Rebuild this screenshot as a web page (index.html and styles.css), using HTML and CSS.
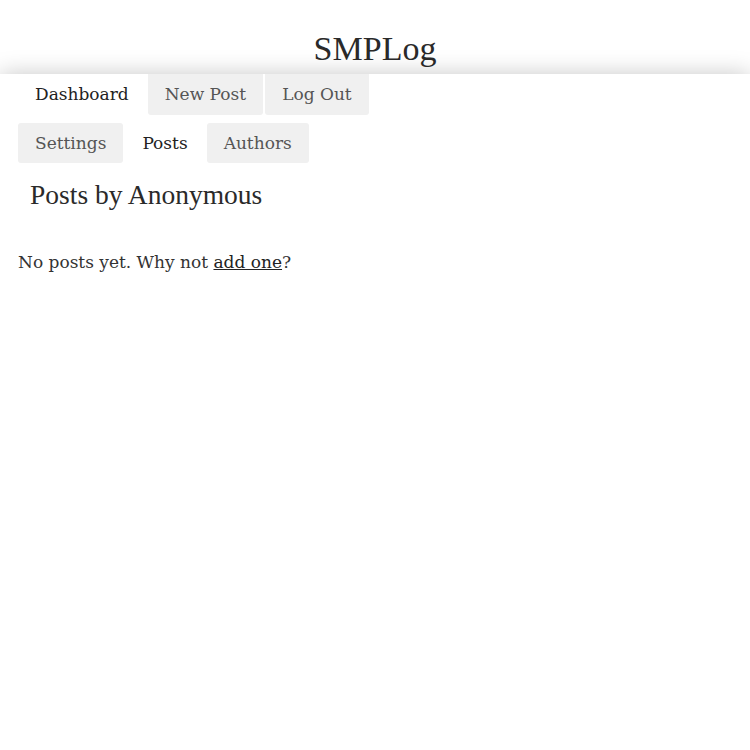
FILE: index.html
```html
<!DOCTYPE html>
<html>
<head>
<meta charset="utf-8">
<title>SMPLog</title>
<link rel="stylesheet" href="styles.css">
</head>
<body>
<header class="site-header">
  <h1 class="site-title">SMPLog</h1>
</header>
<div class="page">
  <nav class="tabs tabs-main">
    <a class="tab active" href="#">Dashboard</a>
    <a class="tab" href="#">New Post</a>
    <a class="tab" href="#">Log Out</a>
  </nav>
  <nav class="tabs tabs-sub">
    <a class="tab" href="#">Settings</a>
    <a class="tab active" href="#">Posts</a>
    <a class="tab" href="#">Authors</a>
  </nav>
  <h2 class="section-title">Posts by Anonymous</h2>
  <p class="empty">No posts yet. Why not <a href="#" class="inline-link">add one</a>?</p>
</div>
</body>
</html>
```
FILE: styles.css
```css
html, body {
  margin: 0;
  padding: 0;
  background: #fff;
}
body {
  font-family: "DejaVu Serif", serif;
  color: #333;
}
.site-header {
  height: 74px;
  display: flex;
  justify-content: center;
  align-items: flex-start;
}
.site-title {
  margin: 30px 0 0;
  font-family: "Liberation Serif", serif;
  font-weight: normal;
  font-size: 34px;
  line-height: 38px;
  color: #2a2a2a;
}
.page {
  position: relative;
  background: #fff;
  box-shadow: 0 0 22px rgba(0, 0, 0, 0.22);
  min-height: 676px;
  padding: 0 18px;
}
.tabs {
  display: flex;
  gap: 2px;
}
.tabs-sub {
  margin-top: 8px;
}
.tab {
  display: block;
  padding: 0 17px;
  height: 41px;
  line-height: 41px;
  font-size: 17px;
  color: #555;
  text-decoration: none;
  background: #f0f0f0;
  border-radius: 0 0 3px 3px;
}
.tabs-sub .tab {
  height: 40px;
  line-height: 40px;
  border-radius: 3px;
}
.tab.active {
  background: #fff;
  color: #222;
}
.section-title {
  margin: 14px 0 0 12px;
  font-family: "Liberation Serif", serif;
  font-weight: normal;
  font-size: 27.5px;
  line-height: 36px;
  color: #2a2a2a;
}
.empty {
  margin: 36px 0 0;
  font-size: 17px;
  line-height: 26px;
  color: #333;
}
.inline-link {
  color: #222;
  text-decoration: underline;
}
```
